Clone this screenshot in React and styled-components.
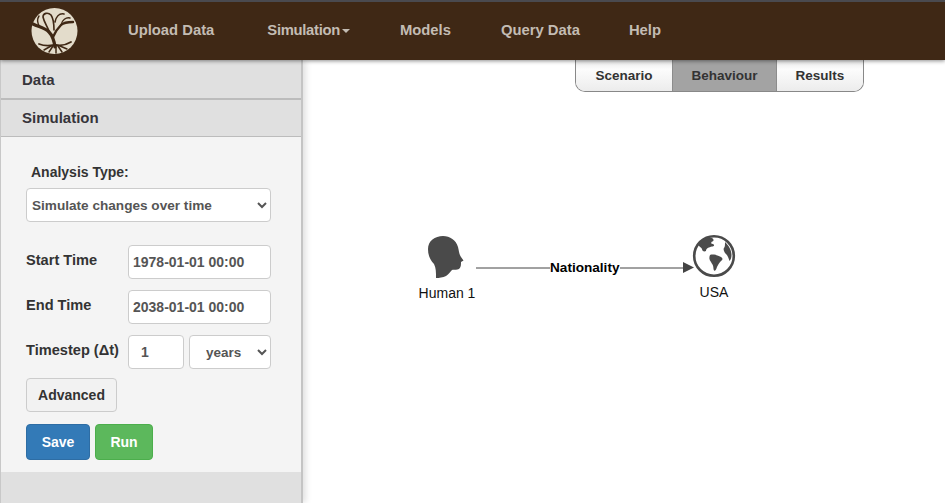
import React from "react";
import styled, { createGlobalStyle } from "styled-components";

const Global = createGlobalStyle`
  html, body { margin: 0; padding: 0; height: 100%; background: #fff; overflow: hidden; }
  body { font-family: "Liberation Sans", Arial, sans-serif; color: #333; }
  #root { height: 100%; }
`;

const Page = styled.div`
  width: 945px;
  height: 503px;
  display: flex;
  flex-direction: column;
`;

const NavBar = styled.nav`
  height: 58px;
  flex: none;
  display: flex;
  align-items: center;
  background: #3f2815;
  border-top: 2px solid #4a4a4f;
  box-shadow: 0 1px 4px rgba(0, 0, 0, 0.45);
  position: relative;
  z-index: 2;
`;

const LogoBox = styled.div`
  width: 128px;
  flex: none;
  padding-left: 30px;
  box-sizing: border-box;
  display: flex;
`;

const NavList = styled.div`
  display: flex;
  gap: 50px;
  font-size: 14.8px;
  font-weight: 700;
  color: #c3bcb3;
  margin-top: -2px;
`;

const NavMenu = styled.span`
  margin-left: 3px;
  letter-spacing: -0.3px;
`;

const Caret = styled.span`
  display: inline-block;
  margin-left: 2px;
  vertical-align: middle;
  border-top: 4px solid #c3bcb3;
  border-left: 4px solid transparent;
  border-right: 4px solid transparent;
`;

const NavLast = styled.span`
  margin-left: -1px;
`;

const Main = styled.div`
  flex: 1;
  display: flex;
  min-height: 0;
`;

const Side = styled.aside`
  width: 300px;
  flex: none;
  background: #e0e0e0;
  border-left: 1px solid #c8c8c8;
  border-right: 2px solid #c4c4c4;
  box-shadow: 3px 0 6px rgba(0, 0, 0, 0.12);
  display: flex;
  flex-direction: column;
`;

const SideHead = styled.div`
  height: ${(p) => p.$h}px;
  flex: none;
  box-sizing: border-box;
  display: flex;
  align-items: center;
  padding-left: 21px;
  padding-bottom: ${(p) => p.$pb}px;
  font-size: 15px;
  font-weight: 700;
  color: #36343a;
  background: #e0e0e0;
  border-bottom: ${(p) => p.$b}px solid #bcbcbc;
`;

const SideBody = styled.div`
  height: 335px;
  flex: none;
  box-sizing: border-box;
  background: #f4f4f4;
  padding: 26px 30px 0 25px;
  display: flex;
  flex-direction: column;
`;

const TypeLabel = styled.label`
  font-size: 14px;
  font-weight: 700;
  color: #333;
  padding-left: 5px;
  margin-bottom: 7px;
  line-height: 18px;
`;

const Select = styled.select`
  width: ${(p) => p.$w}px;
  height: 34px;
  flex: none;
  box-sizing: border-box;
  background: #fff;
  border: 1px solid #ccc;
  border-radius: 4px;
  font-family: inherit;
  font-size: ${(p) => p.$fs}px;
  font-weight: 700;
  color: #555;
  padding: 0 ${(p) => p.$pad}px;
`;

const FormRow = styled.div`
  display: flex;
  align-items: flex-start;
  gap: 5px;
  margin-top: ${(p) => p.$top}px;
`;

const RowLabel = styled.label`
  width: 97px;
  flex: none;
  margin-top: 5px;
  font-size: 14.6px;
  font-weight: 700;
  color: #333;
  line-height: 20px;
  white-space: nowrap;
`;

const Input = styled.input`
  width: ${(p) => p.$w}px;
  height: 34px;
  flex: none;
  box-sizing: border-box;
  background: #fff;
  border: 1px solid #ccc;
  border-radius: 4px;
  font-family: inherit;
  font-size: 14px;
  font-weight: 700;
  color: #555;
  padding: 0 ${(p) => p.$pad}px;
`;

const Advanced = styled.button`
  width: 91px;
  height: 34px;
  margin-top: 9px;
  box-sizing: border-box;
  background: #f2f2f2;
  border: 1px solid #ccc;
  border-radius: 4px;
  font-family: inherit;
  font-size: 14px;
  font-weight: 700;
  color: #333;
  padding: 0;
`;

const ButtonRow = styled.div`
  display: flex;
  gap: 5px;
  margin-top: 12px;
`;

const Action = styled.button`
  width: ${(p) => p.$w}px;
  height: 36px;
  box-sizing: border-box;
  background: ${(p) => p.$bg};
  border: 1px solid ${(p) => p.$line};
  border-radius: 4px;
  font-family: inherit;
  font-size: 14px;
  font-weight: 700;
  color: #fff;
  padding: 0;
`;

const Content = styled.section`
  flex: 1;
  position: relative;
`;

const Tabs = styled.div`
  position: absolute;
  left: 272px;
  top: 0;
  height: 31px;
  display: flex;
  border: 1px solid #888;
  border-top: none;
  border-radius: 0 0 10px 10px;
  overflow: hidden;
`;

const Tab = styled.div`
  width: ${(p) => p.$w}px;
  box-sizing: border-box;
  display: flex;
  align-items: center;
  justify-content: center;
  font-size: 13.5px;
  font-weight: 700;
  color: #333;
  background: ${(p) => (p.$on ? "#a3a3a3" : "linear-gradient(#e8e8e8, #fcfcfc 30%, #ececec)")};
  border-left: ${(p) => (p.$on ? "1px solid #8c8c8c" : "none")};
  border-right: ${(p) => (p.$on ? "1px solid #8c8c8c" : "none")};
`;

const Node = styled.div`
  position: absolute;
  left: ${(p) => p.$x}px;
  top: ${(p) => p.$y}px;
  width: 60px;
  display: flex;
  flex-direction: column;
  align-items: center;
  font-size: 14px;
  color: #111;
  line-height: 16px;
  gap: ${(p) => p.$gap}px;
`;

const HeadIcon = styled.svg`
  margin: 1px 2px 0 0;
`;

const Link = styled.svg`
  position: absolute;
  left: 171px;
  top: 195px;
`;

const LinkLabel = styled.span`
  position: absolute;
  left: 247px;
  top: 200px;
  background: #fff;
  font-size: 13.6px;
  font-weight: 700;
  color: #000;
  line-height: 16px;
`;

function Logo() {
  return (
    <svg width="48" height="48" viewBox="0 0 48 48">
      <circle cx="24.500" cy="24" r="23" fill="#e3dccb" />
      <g fill="none" stroke="#3f2815" strokeLinecap="round">
        <path d="M25 40 C24 33 23 29 19 25 C15 21 9 20 3 17" strokeWidth="3.200" />
        <path d="M23 30 C25 25 28 21 31 18 C34 15 38 15 43 15" strokeWidth="2.400" />
        <path d="M19 24 C17 19 14 15 13 10 C13 6 18 5 21 8 C23 11 24 17 24 23" strokeWidth="1.600" />
        <path d="M25 15 C26 10 29 6 34 7" strokeWidth="1.600" />
        <path d="M31 18 C32 13 36 10 40 11" strokeWidth="1.400" />
        <path d="M10 20 C7 16 7 12 9 9" strokeWidth="1.400" />
        <path d="M24 38 C19 39 14 39 9 37" strokeWidth="1.800" />
        <path d="M26 38 C31 39 36 38 41 35" strokeWidth="1.800" />
        <path d="M23 39 L19 45 M26 39 L26 46 M28 39 L32 45 M21 39 L14 43 M30 39 L37 42" strokeWidth="1.500" />
      </g>
    </svg>
  );
}

function Head() {
  return (
    <HeadIcon width="36" height="44" viewBox="0 0 36 44">
      <path
        fill="#4a4a4a"
        d="M15 0 C22 0 28 4 30 11 C31 15 31 18 33 21 L35.500 24.500 L33 26 C33 29 33 31 31 33 C28 34.500 26 33 24 34 C22 36 21 38 18 40 C15 41.500 11 42 8 42 C8 36 8 32 6 28 C2 24 0 19 0 13 C0 5 7 0 15 0 Z"
      />
    </HeadIcon>
  );
}

function Globe() {
  return (
    <svg width="44" height="44" viewBox="0 0 44 44">
      <circle cx="22" cy="22" r="19.800" fill="#fff" stroke="#4a4a4a" strokeWidth="2.600" />
      <g fill="#4a4a4a">
        <path d="M17 3 C12 4 8 7 6 10 C7 13 9 13 10 15 C10 17 12 18 14 17 C14 14 17 13.500 20 12.500 C22 12.500 23 11 21 10 C19 10 18.500 9 20 7.500 C22 7.500 22 5 20 4 Z" />
        <path d="M18 21 C21 20 25 21 29 23 C31 24 31 26 29 27 C27 29 26 31 25 33 C24 37 22 38 21.500 35 C21.500 31 20 30 19 28 C17 26 17 23 18 21 Z" />
        <path d="M33 8 C37 12 39.500 16 39.500 21 C39.500 24 38.500 26 37.500 27 C36.500 24 36 22 34 20 C32 18 31 15 32 14 C33 13 33 11 33 8 Z" />
      </g>
    </svg>
  );
}

export default function App() {
  return (
    <Page>
      <Global />
      <NavBar>
        <LogoBox>
          <Logo />
        </LogoBox>
        <NavList>
          <span>Upload Data</span>
          <NavMenu>
            Simulation
            <Caret />
          </NavMenu>
          <span>Models</span>
          <span>Query Data</span>
          <NavLast>Help</NavLast>
        </NavList>
      </NavBar>
      <Main>
        <Side>
          <SideHead $h={40} $b={2} $pb={0}>Data</SideHead>
          <SideHead $h={37} $b={1} $pb={2}>Simulation</SideHead>
          <SideBody>
            <TypeLabel>Analysis Type:</TypeLabel>
            <Select $w={245} $pad={1} $fs={13.6} defaultValue="time">
              <option value="time">Simulate changes over time</option>
            </Select>
            <FormRow $top={23}>
              <RowLabel>Start Time</RowLabel>
              <Input $w={143} $pad={4} defaultValue="1978-01-01 00:00" />
            </FormRow>
            <FormRow $top={11}>
              <RowLabel>End Time</RowLabel>
              <Input $w={143} $pad={4} defaultValue="2038-01-01 00:00" />
            </FormRow>
            <FormRow $top={11}>
              <RowLabel>Timestep (Δt)</RowLabel>
              <Input $w={56} $pad={12} defaultValue="1" />
              <Select $w={82} $pad={12} $fs={13.5} defaultValue="years">
                <option value="years">years</option>
              </Select>
            </FormRow>
            <div>
              <Advanced>Advanced</Advanced>
            </div>
            <ButtonRow>
              <Action $w={64} $bg="#337ab7" $line="#2e6da4">Save</Action>
              <Action $w={58} $bg="#5cb85c" $line="#4cae4c">Run</Action>
            </ButtonRow>
          </SideBody>
        </Side>
        <Content>
          <Tabs>
            <Tab $w={96}>Scenario</Tab>
            <Tab $w={105} $on>Behaviour</Tab>
            <Tab $w={86}>Results</Tab>
          </Tabs>
          <Node $x={114} $y={175} $gap={5}>
            <Head />
            Human 1
          </Node>
          <Link width="230" height="24">
            <line x1="2" y1="13" x2="212" y2="13" stroke="#444" strokeWidth="1" />
            <path d="M209 7 L220 12.500 L209 18 Z" fill="#444" />
          </Link>
          <LinkLabel>Nationality</LinkLabel>
          <Node $x={381} $y={174} $gap={6}>
            <Globe />
            USA
          </Node>
        </Content>
      </Main>
    </Page>
  );
}
